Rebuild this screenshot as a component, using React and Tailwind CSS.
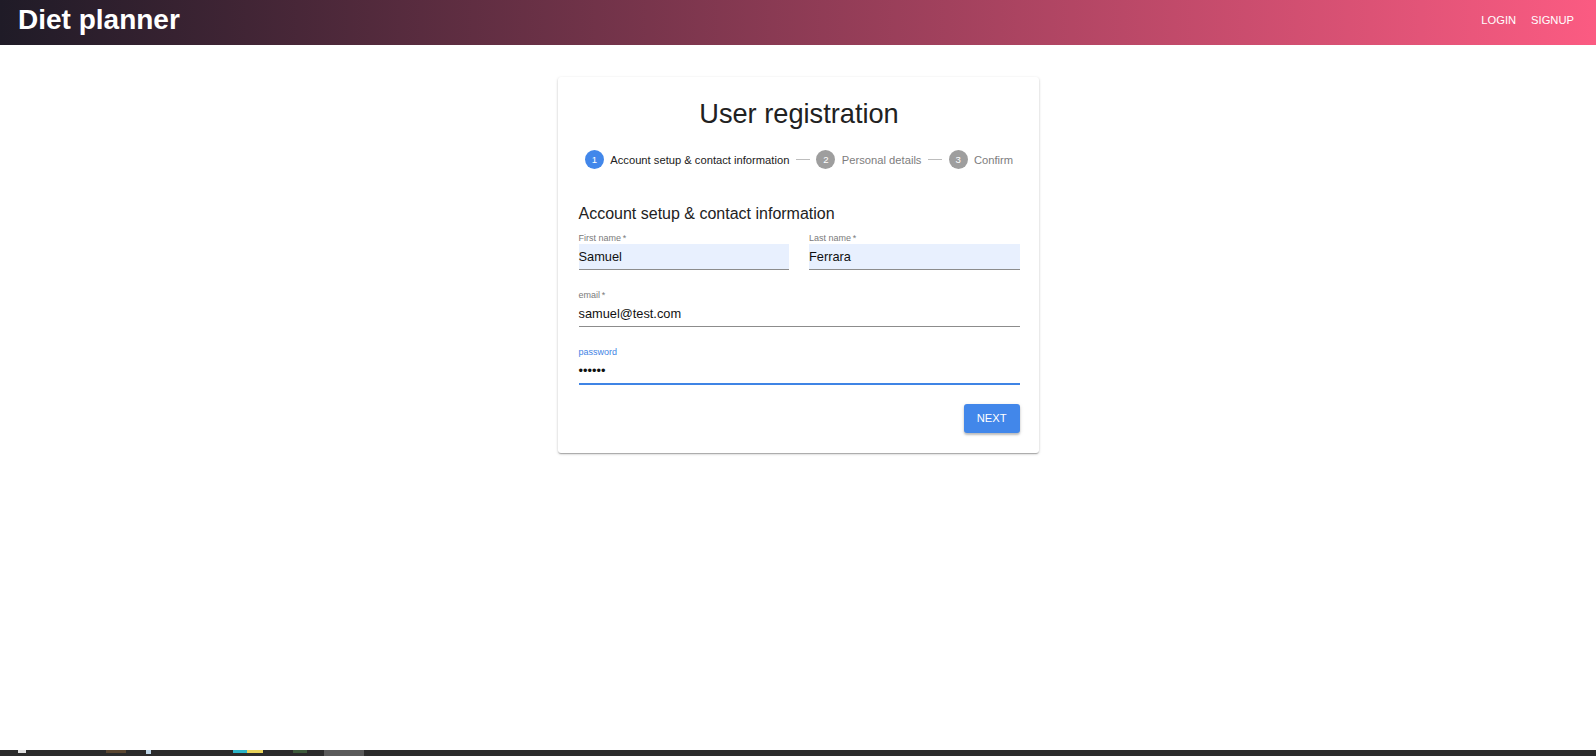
import React from 'react';

const font = { fontFamily: '"Liberation Sans", Arial, sans-serif' };

const steps = [
  { n: 1, label: 'Account setup & contact information', active: true },
  { n: 2, label: 'Personal details' },
  { n: 3, label: 'Confirm' },
];

const Step = ({ n, label, active }) => (
  <div className="flex items-center px-[6.4px]">
    <span
      className={`flex items-center justify-center w-[19px] h-[19px] rounded-full text-white text-[9.6px] leading-none ${
        active ? 'bg-[#4287ea]' : 'bg-[#9e9e9e]'
      }`}
    >
      {n}
    </span>
    <span className={`ml-[6.4px] text-[11.2px] leading-[14px] whitespace-nowrap ${active ? 'text-[#212121]' : 'text-[#7d7d7d]'}`}>
      {label}
    </span>
  </div>
);

const Field = ({ label, value, filled, focused, type }) => (
  <div>
    <div className={`text-[9px] leading-[12px] ${focused ? 'text-[#3f84e5]' : 'text-[#7a7a7a]'}`}>{label}</div>
    <div
      className={`flex items-center text-[12.8px] text-[#111] ${filled ? 'bg-[#e8f0fe]' : ''} ${
        focused ? 'border-b-2 border-[#3f84e5] h-[27px]' : 'border-b border-[#8c8c8c] h-[26px]'
      }`}
    >
      {type === 'password' ? <span>••••••</span> : value}
    </div>
  </div>
);

export default function App() {
  return (
    <div className="min-h-screen flex flex-col bg-white" style={font}>
      <header className="h-[45px] flex items-center justify-between pl-[18px] pr-[22px] pb-[5px] bg-[linear-gradient(to_right,#1f1b27,#fb5b82)]">
        <span className="text-white text-[28px] font-bold leading-none">Diet planner</span>
        <nav className="flex gap-[15px] text-white text-[11.2px]">
          <span>LOGIN</span>
          <span>SIGNUP</span>
        </nav>
      </header>

      <main className="flex-1">
        <div className="w-[481px] mx-auto mt-[32px] rounded-[3px] bg-white pl-[21px] pr-[19px] pt-[20px] pb-[20px] shadow-[0_1px_3px_rgba(0,0,0,0.2),0_1px_1px_rgba(0,0,0,0.14),0_2px_1px_-1px_rgba(0,0,0,0.12)]">
          <h1 className="text-center text-[27.2px] leading-[34px] text-[#212121]">User registration</h1>

          <div className="mt-[19px] h-[19px] flex items-center">
            {steps.map((s, i) => (
              <React.Fragment key={s.n}>
                {i > 0 && <div className="flex-1 border-t border-[#bdbdbd]" />}
                <Step {...s} />
              </React.Fragment>
            ))}
          </div>

          <h2 className="mt-[35px] text-[16px] leading-[20px] text-[#222]">Account setup &amp; contact information</h2>

          <div className="mt-[8px] grid grid-cols-2 gap-[20px]">
            <Field label={'First name\u2009*'} value="Samuel" filled />
            <Field label={'Last name\u2009*'} value="Ferrara" filled />
          </div>
          <div className="mt-[19px]">
            <Field label={'email\u2009*'} value="samuel@test.com" />
          </div>
          <div className="mt-[19px]">
            <Field label="password" type="password" focused />
          </div>

          <div className="mt-[19px] flex justify-end">
            <button className="h-[29px] px-[13px] rounded-[3px] bg-[#4287ea] text-white text-[11.2px] shadow-[0_2px_2px_rgba(0,0,0,0.2),0_1px_4px_rgba(0,0,0,0.12)]">
              NEXT
            </button>
          </div>
        </div>
      </main>

      <div className="h-[6px] bg-[#2b2b2b] flex items-start">
        <div className="ml-[18px] w-[8px] h-[3px] bg-[#e0e0e0]" />
        <div className="ml-[80px] w-[20px] h-[3px] bg-[#5a4630]" />
        <div className="ml-[20px] w-[5px] h-[4px] bg-[#bcd4e6]" />
        <div className="ml-[82px] w-[14px] h-[3px] bg-[#2bb5c8]" />
        <div className="w-[16px] h-[3px] bg-[#e8d35a]" />
        <div className="ml-[30px] w-[14px] h-[3px] bg-[#3d5a3a]" />
        <div className="ml-[17px] w-[40px] h-[6px] bg-[#5a5a5a]" />
      </div>
    </div>
  );
}
